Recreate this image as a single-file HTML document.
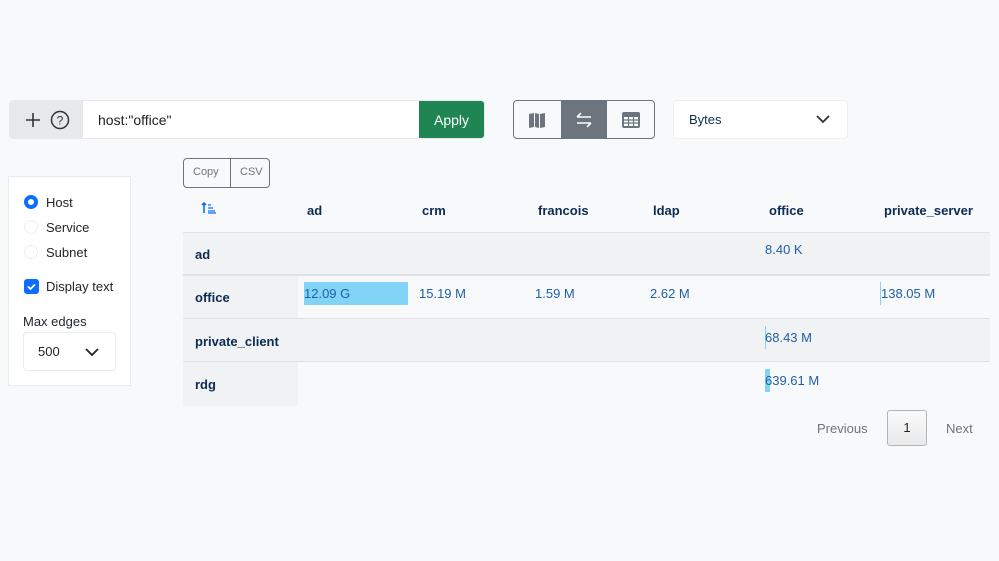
<!DOCTYPE html>
<html><head><style>
*{box-sizing:border-box;margin:0;padding:0}
body{width:999px;height:561px;background:#f8f9fa;font-family:"Liberation Sans","DejaVu Sans",sans-serif;font-size:13px;color:#212529;position:relative;overflow:hidden}
.abs{position:absolute}
.tb{left:9px;top:100px;width:476px;height:39px;border-radius:4px;background:#fff;border:1px solid #e6e8eb;overflow:hidden}
.tb .l{position:absolute;left:0;top:0;width:73px;height:39px;background:#e6e8eb}
.apply{position:absolute;right:0;top:0;width:65px;height:39px;background:#1e8553;color:#fff;font-size:14px;line-height:39px;text-align:center}
.vg{left:513px;top:100px;width:142px;height:39px;border:1px solid #6c757d;border-radius:4px;overflow:hidden;display:flex}
.vg div{width:47px;height:37px;display:flex;align-items:center;justify-content:center}
.sel{left:673px;top:100px;width:175px;height:39px;background:#fff;border:1px solid #eceef0;border-radius:4px}
.side{left:8px;top:176px;width:123px;height:210px;background:#fff;border:1px solid #e9ecef}
.th{font-weight:bold;color:#0d2b52;font-size:13px}
.row{position:absolute;left:183px;width:807px;height:43px;border-bottom:1px solid #dee2e6}
.v{position:absolute;color:#1f5fa8;font-size:13px}
</style></head><body>
<div class="abs tb"><div class="l">
<svg class="abs" style="left:14px;top:10px" width="18" height="18"><path d="M9 2v14M2 9h14" stroke="#333" stroke-width="1.6"/></svg>
<svg class="abs" style="left:40px;top:9px" width="20" height="20"><circle cx="10" cy="10" r="8.5" fill="none" stroke="#333" stroke-width="1.5"/><text x="10" y="14.5" text-anchor="middle" font-size="12" fill="#333" font-family="Liberation Sans">?</text></svg>
</div>
<span class="abs" style="left:88px;top:11px;font-size:14px;color:#222">host:"office"</span>
<div class="apply">Apply</div></div>
<div class="abs vg">
<div><svg width="18" height="18"><path d="M1 3l5-1v14l-5 1zM7 2l4 1v14l-4-1zM12 3l5-1v14l-5 1z" fill="#6c757d"/></svg></div>
<div style="background:#6c757d"><svg width="20" height="18"><path d="M3 6h14M3 6l4-4M17 12H3M17 12l-4 4" stroke="#fff" stroke-width="1.6" fill="none"/></svg></div>
<div><svg width="18" height="16"><rect x="0" y="0" width="18" height="16" rx="2" fill="#6c757d"/><path d="M2 5h14v9H2z" fill="#fff"/><path d="M2 8h14M2 11h14M6.5 5v9M11.5 5v9" stroke="#6c757d" stroke-width="1.2"/></svg></div>
</div>
<div class="abs sel"><span class="abs" style="left:15px;top:11px;color:#0d2b52">Bytes</span>
<svg class="abs" style="left:142px;top:13px" width="14" height="10"><path d="M1 2l6 6 6-6" stroke="#333" stroke-width="1.8" fill="none"/></svg></div>

<div class="abs side">
<div class="abs" style="left:15px;top:18px;width:14px;height:14px;border-radius:50%;border:4px solid #0d6efd"></div>
<span class="abs" style="left:37px;top:18px">Host</span>
<div class="abs" style="left:15px;top:43px;width:14px;height:14px;border-radius:50%;border:1px solid #eee"></div>
<span class="abs" style="left:37px;top:43px">Service</span>
<div class="abs" style="left:15px;top:68px;width:14px;height:14px;border-radius:50%;border:1px solid #eee"></div>
<span class="abs" style="left:37px;top:68px">Subnet</span>
<div class="abs" style="left:15px;top:102px;width:15px;height:15px;border-radius:3px;background:#0d6efd"><svg width="15" height="15"><path d="M4 7.5l2.5 2.5 4.5-4.5" stroke="#fff" stroke-width="1.8" fill="none"/></svg></div>
<span class="abs" style="left:37px;top:102px">Display text</span>
<span class="abs" style="left:14px;top:137px">Max edges</span>
<div class="abs" style="left:14px;top:155px;width:93px;height:39px;border:1px solid #e9ecef;border-radius:4px">
<span class="abs" style="left:14px;top:11px">500</span>
<svg class="abs" style="left:61px;top:14px" width="14" height="10"><path d="M1 2l6 6 6-6" stroke="#222" stroke-width="1.8" fill="none"/></svg></div>
</div>

<div class="abs" style="left:183px;top:158px;width:87px;height:30px;border:1px solid #6c757d;border-radius:4px;font-size:11px;color:#6c757d">
<span class="abs" style="left:9px;top:7px">Copy</span>
<div class="abs" style="left:46px;top:0;width:1px;height:28px;background:#6c757d"></div>
<span class="abs" style="left:56px;top:7px">CSV</span></div>

<svg class="abs" style="left:201px;top:202px" width="16" height="12"><path d="M3 11V1M1 3l2-2 2 2" stroke="#0d6efd" stroke-width="1.6" fill="none"/><path d="M7 3h3M7 6h5M7 9h7M7 11h8" stroke="#0d6efd" stroke-width="1.2"/></svg>
<span class="abs th" style="left:307px;top:203px">ad</span>
<span class="abs th" style="left:422px;top:203px">crm</span>
<span class="abs th" style="left:538px;top:203px">francois</span>
<span class="abs th" style="left:653px;top:203px">ldap</span>
<span class="abs th" style="left:769px;top:203px">office</span>
<span class="abs th" style="left:884px;top:203px">private_server</span>

<div class="row" style="top:232px;background:#f1f2f4;border-top:1px solid #dee2e6"></div>
<div class="row" style="top:276px;background:#f8f9fa"></div>
<div class="row" style="top:319px;background:#f1f2f4"></div>
<div class="row" style="top:362px;height:44px;border:none;background:#f8f9fa"></div>
<div class="abs" style="left:183px;top:276px;width:115px;height:130px;background:#f1f2f4"></div>
<div class="abs" style="left:183px;top:318px;width:807px;height:1px;background:#dee2e6"></div>
<div class="abs" style="left:183px;top:361px;width:807px;height:1px;background:#dee2e6"></div>
<div class="abs" style="left:183px;top:275px;width:807px;height:1px;background:#dee2e6"></div>

<span class="abs th" style="left:195px;top:247px">ad</span>
<span class="abs th" style="left:195px;top:290px">office</span>
<span class="abs th" style="left:195px;top:334px">private_client</span>
<span class="abs th" style="left:195px;top:377px">rdg</span>

<span class="v" style="left:765px;top:242px">8.40 K</span>
<div class="abs" style="left:304px;top:282px;width:104px;height:23px;background:#81d4f5"></div>
<span class="v" style="left:304px;top:286px">12.09 G</span>
<span class="v" style="left:419px;top:286px">15.19 M</span>
<span class="v" style="left:535px;top:286px">1.59 M</span>
<span class="v" style="left:650px;top:286px">2.62 M</span>
<div class="abs" style="left:880px;top:282px;width:1px;height:23px;background:#81d4f5"></div>
<span class="v" style="left:881px;top:286px">138.05 M</span>
<div class="abs" style="left:765px;top:326px;width:1px;height:23px;background:#81d4f5"></div>
<span class="v" style="left:765px;top:330px">68.43 M</span>
<div class="abs" style="left:765px;top:369px;width:5px;height:23px;background:#81d4f5"></div>
<span class="v" style="left:765px;top:373px">639.61 M</span>

<span class="abs" style="left:817px;top:421px;color:#6c757d">Previous</span>
<div class="abs" style="left:887px;top:410px;width:40px;height:36px;border:1px solid #adb5bd;border-radius:3px;background:linear-gradient(#fafafa,#e9e9e9);text-align:center;line-height:34px">1</div>
<span class="abs" style="left:946px;top:421px;color:#6c757d">Next</span>
</body></html>
